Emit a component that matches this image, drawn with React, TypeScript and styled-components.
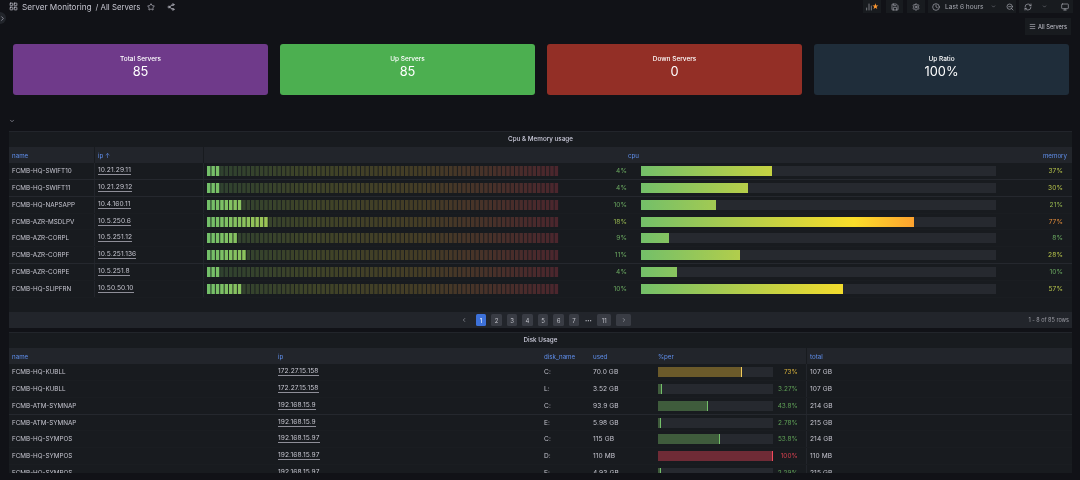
import React from "react";
import styled, { createGlobalStyle } from "styled-components";
import { BarChart2, ChevronDown, ChevronLeft, ChevronRight, Clock, LayoutGrid, Menu, Monitor, RefreshCw, Save, Settings, Share2, Star, ZoomOut } from "lucide-react";

const Global = createGlobalStyle`
  html, body { margin: 0; padding: 0; background: #111217; }
  * { box-sizing: border-box; }
  #root { width: 1080px; height: 480px; overflow: hidden; }
`;

const Page = styled.div`
  position: relative;
  width: 1080px;
  height: 480px;
  overflow: hidden;
  background: #111217;
  color: #ccccdc;
  font-family: Inter, "Liberation Sans", sans-serif;
  font-size: 7px;
  filter: blur(0.4px);
`;

const SideToggle = styled.div`
  position: absolute;
  left: -6px;
  top: 12px;
  width: 12px;
  height: 12px;
  border-radius: 50%;
  background: #22252b;
  color: #ccccdc;
  display: flex;
  align-items: center;
  justify-content: flex-end;
`;

const TopBar = styled.header`
  height: 13px;
  display: flex;
  align-items: center;
  justify-content: space-between;
  padding: 0 7px 0 9px;
`;

const Crumbs = styled.div`
  display: flex;
  align-items: center;
  gap: 4px;
  font-size: 8.2px;
  color: #c6c6d0;
`;

const CrumbSmall = styled.span`
  font-size: 7.8px;
  margin-right: 3px;
`;

const ShareWrap = styled.span`
  display: flex;
  margin-left: 8px;
`;

const Tools = styled.div`
  display: flex;
  align-items: center;
  height: 13px;
`;

const ToolButton = styled.div<{ $w: number; $gap?: number; $pad?: number }>`
  width: ${(p) => p.$w}px;
  height: 13px;
  margin-left: ${(p) => p.$gap ?? 0}px;
  padding-left: ${(p) => p.$pad ?? 0}px;
  display: flex;
  align-items: center;
  justify-content: ${(p) => (p.$pad ? "flex-start" : "center")};
  background: #181b1f;
  color: #a9abb3;
  font-size: 6.6px;
`;

const Spacer = styled.span<{ $w: number }>`
  flex: none;
  width: ${(p) => p.$w}px;
`;

const StarDot = styled.span`
  color: #ff9830;
  font-size: 7px;
  margin-left: -1px;
`;

const LinkRow = styled.div`
  display: flex;
  justify-content: flex-end;
  padding: 5px 9px 0 0;
  height: 23px;
`;

const LinkButton = styled.div`
  width: 46px;
  height: 17px;
  background: #181b1f;
  color: #c6c6d0;
  font-size: 5.7px;
  display: flex;
  align-items: center;
  justify-content: center;
  gap: 2px;
`;

const Cards = styled.section`
  display: grid;
  grid-template-columns: repeat(4, 255px);
  gap: 12px;
  padding: 8px 0 0 13px;
`;

const Card = styled.div<{ $bg: string }>`
  height: 51px;
  border-radius: 3px;
  background: ${(p) => p.$bg};
  color: #fff;
  display: flex;
  flex-direction: column;
  align-items: center;
  padding-top: 11px;
`;

const CardTitle = styled.div`
  font-size: 6.5px;
  line-height: 8px;
  font-weight: 500;
`;

const CardValue = styled.div`
  font-size: 12.8px;
  line-height: 16px;
  margin-top: 1px;
`;

const Collapse = styled.div`
  height: 36px;
  padding: 22px 0 0 9px;
  color: #ccccdc;
`;

const Panel = styled.section<{ $h: number }>`
  height: ${(p) => p.$h}px;
  margin: 0 8px 4px 9px;
  background: #181b1f;
  border-top: 1px solid #22252b;
  display: flex;
  flex-direction: column;
  overflow: hidden;
`;

const PanelTitle = styled.div`
  height: 15px;
  flex: none;
  padding-bottom: 1px;
  display: flex;
  align-items: center;
  justify-content: center;
  font-size: 6.3px;
  font-weight: 500;
  color: #ccccdc;
`;

const Grid = styled.div<{ $cols: string; $h: number }>`
  display: grid;
  grid-template-columns: ${(p) => p.$cols};
  height: ${(p) => p.$h}px;
  align-items: stretch;
  flex: none;
`;

const HeadRow = styled(Grid)`
  background: #22252b;
`;

const BodyRow = styled(Grid)<{ $rule?: boolean }>`
  border-bottom: 1px solid ${(p) => (p.$rule ? "#25282e" : "#1a1d21")};
`;

const HeadCell = styled.div<{ $right?: boolean; $line?: boolean; $end?: number }>`
  display: flex;
  align-items: center;
  justify-content: ${(p) => (p.$right ? "flex-end" : "flex-start")};
  padding: 0 ${(p) => p.$end ?? 3}px 0 3px;
  color: #6090ee;
  font-size: 6.2px;
  border-left: ${(p) => (p.$line ? "1px solid #181b1f" : "0")};
`;

const Cell = styled.div<{ $right?: boolean; $line?: boolean; $color?: string; $end?: number }>`
  display: flex;
  align-items: center;
  justify-content: ${(p) => (p.$right ? "flex-end" : "flex-start")};
  padding: 0 ${(p) => p.$end ?? 3}px 0 3px;
  color: ${(p) => p.$color ?? "#c6c6d0"};
  font-size: 6.6px;
  letter-spacing: 0.1px;
  border-left: ${(p) => (p.$line ? "1px solid #22252b" : "0")};
  white-space: nowrap;
  overflow: hidden;
`;

const NameCell = styled(Cell)`
  font-size: 6.3px;
  letter-spacing: 0;
`;

const BarCell = styled.div`
  display: flex;
  align-items: center;
  justify-content: flex-end;
`;

const IpLink = styled.span`
  border-bottom: 1px solid #8e8e98;
  line-height: 7px;
`;

const LedSvg = styled.svg`
  display: block;
  width: 352px;
  height: 10px;
  flex: none;
`;

const Track = styled.div`
  width: 355px;
  height: 10px;
  background: #26292f;
`;

const GradFill = styled.div`
  height: 100%;
  background: linear-gradient(90deg, #73bf69 0%, #fade2a 60%, #ff9830 80%, #f2495c 100%);
  background-size: 355px 100%;
`;

const Footer = styled.div`
  height: 16px;
  flex: none;
  background: #22252b;
  display: flex;
  align-items: center;
  justify-content: center;
  position: relative;
  margin-top: auto;
`;

const Pager = styled.div`
  display: flex;
  align-items: center;
  gap: 5px;
  margin-left: 7px;
`;

const PageBtn = styled.div<{ $active?: boolean; $w?: number; $ghost?: boolean }>`
  width: ${(p) => p.$w ?? 10.5}px;
  height: 12px;
  border-radius: 1.5px;
  display: flex;
  align-items: center;
  justify-content: center;
  font-size: 6px;
  color: ${(p) => (p.$active ? "#fff" : "#bfc0c8")};
  background: ${(p) => (p.$active ? "#3d71d9" : p.$ghost ? "transparent" : "#393c44")};
`;

const Dots = styled(PageBtn)`
  font-size: 4px;
`;

const RowCount = styled.div`
  position: absolute;
  right: 3px;
  top: 0;
  line-height: 16px;
  color: #9a9ba3;
  font-size: 5.5px;
`;

const DiskBarWrap = styled.div`
  display: flex;
  align-items: center;
  height: 100%;
`;

const DiskTrack = styled.div`
  width: 115px;
  height: 10px;
  background: #26292f;
  flex: none;
`;

const DiskFill = styled.div<{ $fill: string; $edge: string }>`
  height: 100%;
  background: ${(p) => p.$fill};
  border-right: 1px solid ${(p) => p.$edge};
`;

const DiskPct = styled.div<{ $color: string }>`
  width: 25px;
  text-align: right;
  color: ${(p) => p.$color};
  font-size: 6.4px;
`;

const cpuRows = [
  ["FCMB-HQ-SWIFT10", "10.21.29.11", 4, 37],
  ["FCMB-HQ-SWIFT11", "10.21.29.12", 4, 30],
  ["FCMB-HQ-NAPSAPP", "10.4.160.11", 10, 21],
  ["FCMB-AZR-MSDLPV", "10.5.250.6", 18, 77],
  ["FCMB-AZR-CORPL", "10.5.251.12", 9, 8],
  ["FCMB-AZR-CORPF", "10.5.251.136", 11, 28],
  ["FCMB-AZR-CORPE", "10.5.251.8", 4, 10],
  ["FCMB-HQ-SLIPFRN", "10.50.50.10", 10, 57],
] as const;

const cpuRules = [0, 1, 5];

const diskRows = [
  ["FCMB-HQ-KUBLL", "172.27.15.158", "C:", "70.0 GB", 73, "73%", "107 GB", "o"],
  ["FCMB-HQ-KUBLL", "172.27.15.158", "L:", "3.52 GB", 3.27, "3.27%", "107 GB", "g"],
  ["FCMB-ATM-SYMNAP", "192.168.15.9", "C:", "93.9 GB", 43.8, "43.8%", "214 GB", "g"],
  ["FCMB-ATM-SYMNAP", "192.168.15.9", "E:", "5.98 GB", 2.78, "2.78%", "215 GB", "g"],
  ["FCMB-HQ-SYMPOS", "192.168.15.97", "C:", "115 GB", 53.8, "53.8%", "214 GB", "g"],
  ["FCMB-HQ-SYMPOS", "192.168.15.97", "D:", "110 MB", 100, "100%", "110 MB", "r"],
  ["FCMB-HQ-SYMPOS", "192.168.15.97", "E:", "4.93 GB", 2.29, "2.29%", "215 GB", "g"],
] as const;

const tones = {
  g: { fill: "#3f5c3c", edge: "#73bf69", text: "#5fa057" },
  o: { fill: "#6b5a2a", edge: "#f2cc5c", text: "#d8b23c" },
  r: { fill: "#6f2b36", edge: "#f2495c", text: "#d8404f" },
};

const mix = (a: number[], b: number[], t: number) => a.map((v, i) => Math.round(v + (b[i] - v) * t));

const ledColor = (pos: number, lit: boolean) => {
  const green = [115, 191, 105];
  const yellow = [190, 200, 70];
  const olive = [210, 170, 60];
  const red = [242, 73, 92];
  const c = pos < 0.3 ? mix(green, yellow, pos / 0.3) : pos < 0.6 ? mix(yellow, olive, (pos - 0.3) / 0.3) : mix(olive, red, (pos - 0.6) / 0.4);
  return lit ? `rgb(${c.join(",")})` : `rgba(${c.join(",")},0.24)`;
};

const LED_COUNT = 80;
const LED_PITCH = 352 / LED_COUNT;

const LedGauge = ({ value }: { value: number }) => (
  <LedSvg viewBox="0 0 352 10">
    {Array.from({ length: LED_COUNT }, (_, i) => (
      <rect
        key={i}
        x={i * LED_PITCH}
        y={0}
        width={LED_PITCH - 0.9}
        height={10}
        fill={ledColor(i / LED_COUNT, (i + 0.5) / LED_COUNT < value / 100)}
      />
    ))}
  </LedSvg>
);

const pctColor = (v: number) => (v > 70 ? "#e08a3a" : v > 25 ? "#b5c24a" : v > 15 ? "#97b850" : "#6aa860");

const cards = [
  ["Total Servers", "85", "#6f3a8a"],
  ["Up Servers", "85", "#4caf50"],
  ["Down Servers", "0", "#932f26"],
  ["Up Ratio", "100%", "#1f2d3a"],
];

const CPU_BODY = "85px 109px 356px 71px 366px 1fr";
const DISK = "266px 266px 49px 65px 151px 1fr";

export default function App() {
  return (
    <Page>
      <Global />
      <SideToggle>
        <ChevronRight size={7} />
      </SideToggle>
      <TopBar>
        <Crumbs>
          <LayoutGrid size={9} />
          <span>Server Monitoring</span>
          <CrumbSmall>/ All Servers</CrumbSmall>
          <Star size={8} />
          <ShareWrap>
            <Share2 size={8} />
          </ShareWrap>
        </Crumbs>
        <Tools>
          <ToolButton $w={18}>
            <BarChart2 size={8} />
            <StarDot>★</StarDot>
          </ToolButton>
          <ToolButton $w={17} $gap={5}>
            <Save size={8} />
          </ToolButton>
          <ToolButton $w={18} $gap={4}>
            <Settings size={8} />
          </ToolButton>
          <ToolButton $w={88} $gap={3} $pad={4}>
            <Clock size={8} />
            <Spacer $w={5} />
            Last 6 hours
            <Spacer $w={7} />
            <ChevronDown size={5} />
            <Spacer $w={10} />
            <ZoomOut size={8} />
          </ToolButton>
          <ToolButton $w={37} $gap={3} $pad={5}>
            <RefreshCw size={8} />
            <Spacer $w={10} />
            <ChevronDown size={5} />
          </ToolButton>
          <ToolButton $w={17}>
            <Monitor size={8} />
          </ToolButton>
        </Tools>
      </TopBar>
      <LinkRow>
        <LinkButton>
          <Menu size={7} />
          All Servers
        </LinkButton>
      </LinkRow>
      <Cards>
        {cards.map(([t, v, bg]) => (
          <Card key={t} $bg={bg}>
            <CardTitle>{t}</CardTitle>
            <CardValue>{v}</CardValue>
          </Card>
        ))}
      </Cards>
      <Collapse>
        <ChevronDown size={6} />
      </Collapse>
      <Panel $h={197}>
        <PanelTitle>Cpu &amp; Memory usage</PanelTitle>
        <HeadRow $cols="85px 109px 439px 1fr" $h={16}>
          <HeadCell>name</HeadCell>
          <HeadCell $line>ip ↑</HeadCell>
          <HeadCell $line $right>cpu</HeadCell>
          <HeadCell $right $end={5}>memory</HeadCell>
        </HeadRow>
        {cpuRows.map(([name, ip, cpu, mem], i) => (
          <BodyRow key={ip} $cols={CPU_BODY} $h={16.86} $rule={cpuRules.includes(i)}>
            <NameCell>{name}</NameCell>
            <Cell $line>
              <IpLink>{ip}</IpLink>
            </Cell>
            <Cell $line>
              <LedGauge value={cpu} />
            </Cell>
            <Cell $right $color={pctColor(cpu)}>{cpu}%</Cell>
            <BarCell>
              <Track>
                <GradFill style={{ width: `${mem}%` }} />
              </Track>
            </BarCell>
            <Cell $right $end={9} $color={pctColor(mem)}>{mem}%</Cell>
          </BodyRow>
        ))}
        <Footer>
          <Pager>
            <PageBtn $ghost $w={14}><ChevronLeft size={6} /></PageBtn>
            <PageBtn $active>1</PageBtn>
            {[2, 3, 4, 5, 6, 7].map((n) => (
              <PageBtn key={n}>{n}</PageBtn>
            ))}
            <Dots $ghost $w={8}>•••</Dots>
            <PageBtn $w={14}>11</PageBtn>
            <PageBtn $w={15}><ChevronRight size={6} /></PageBtn>
          </Pager>
          <RowCount>1 - 8 of 85 rows</RowCount>
        </Footer>
      </Panel>
      <Panel $h={141}>
        <PanelTitle>Disk Usage</PanelTitle>
        <HeadRow $cols={DISK} $h={16}>
          <HeadCell>name</HeadCell>
          <HeadCell>ip</HeadCell>
          <HeadCell>disk_name</HeadCell>
          <HeadCell>used</HeadCell>
          <HeadCell>%per</HeadCell>
          <HeadCell $line>total</HeadCell>
        </HeadRow>
        {diskRows.map(([name, ip, disk, used, pct, label, total, tone], i) => (
          <BodyRow key={i} $cols={DISK} $h={16.86} $rule={i === 2}>
            <NameCell>{name}</NameCell>
            <Cell><IpLink>{ip}</IpLink></Cell>
            <Cell>{disk}</Cell>
            <Cell>{used}</Cell>
            <Cell>
              <DiskBarWrap>
                <DiskTrack>
                  <DiskFill $fill={tones[tone].fill} $edge={tones[tone].edge} style={{ width: `${pct}%` }} />
                </DiskTrack>
                <DiskPct $color={tones[tone].text}>{label}</DiskPct>
              </DiskBarWrap>
            </Cell>
            <Cell $line>{total}</Cell>
          </BodyRow>
        ))}
      </Panel>
    </Page>
  );
}
